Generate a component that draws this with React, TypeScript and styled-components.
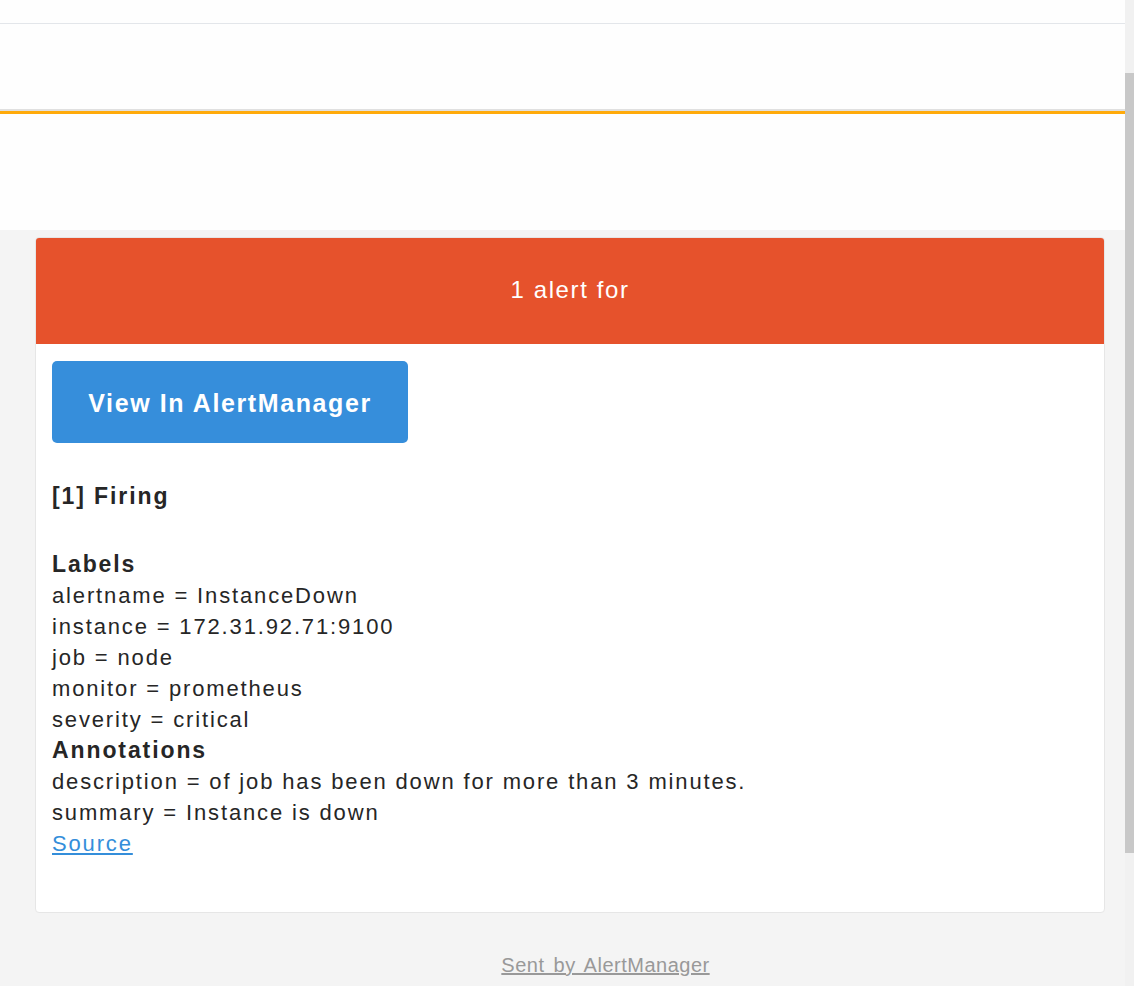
import React from "react";
import styled, { createGlobalStyle } from "styled-components";

const Global = createGlobalStyle`
  html, body { margin: 0; padding: 0; background: #f4f4f4; }
  body { font-family: "Liberation Sans", Arial, Helvetica, sans-serif; overflow: hidden; }
`;

const Frame = styled.div`
  display: flex;
  width: 1134px;
  height: 986px;
  overflow: hidden;
`;

const Page = styled.div`
  flex: 1;
  display: flex;
  flex-direction: column;
  background: #f4f4f4;
`;

const TopBar = styled.div`
  height: 23px;
  background: #fefefe;
  border-bottom: 1px solid #e3e6ea;
`;

const Band = styled.div`
  height: 85px;
  background: #fefefe;
  border-bottom: 2px solid #e0e0e0;
`;

const OrangeRule = styled.div`
  height: 3px;
  background: #ffaa0a;
`;

const Blank = styled.div`
  height: 116px;
  background: #fefefe;
`;

const Main = styled.div`
  padding: 7px 20px 0 35px;
`;

const Card = styled.div`
  background: #ffffff;
  border: 1px solid #e6e6e6;
  border-radius: 4px;
  overflow: hidden;
`;

const Header = styled.div`
  height: 106px;
  background: #e6522c;
  color: #ffffff;
  display: flex;
  align-items: center;
  justify-content: center;
  padding-bottom: 3px;
  box-sizing: border-box;
  font-size: 24px;
  letter-spacing: 1.6px;
`;

const Body = styled.div`
  padding: 17px 16px 53px;
  color: #262626;
  font-size: 22px;
  letter-spacing: 1.85px;
  line-height: 31px;
`;

const Button = styled.a`
  display: flex;
  align-items: center;
  justify-content: center;
  width: 356px;
  height: 82px;
  padding-top: 3px;
  box-sizing: border-box;
  border-radius: 5px;
  background: #368edb;
  color: #ffffff;
  font-weight: bold;
  font-size: 25px;
  letter-spacing: 1.6px;
  text-decoration: none;
`;

const Heading = styled.div<{ $gap: number }>`
  margin-top: ${(p) => p.$gap}px;
  font-weight: bold;
  font-size: 23px;
  letter-spacing: 1.9px;
`;

const Line = styled.div``;

const SourceLink = styled.a`
  color: #348eda;
  text-decoration: underline;
`;

const Footer = styled.div`
  padding: 37px 0 0 86px;
  text-align: center;
  line-height: 31px;
  font-size: 20px;
`;

const FooterLink = styled.a`
  color: #999999;
  text-decoration: underline;
  letter-spacing: 0.5px;
  word-spacing: 3px;
`;

const Scrollbar = styled.div`
  width: 9px;
  background: #f1f1f1;
  display: flex;
  flex-direction: column;
`;

const Thumb = styled.div`
  margin-top: 73px;
  height: 780px;
  background: #c8c8c8;
`;

const labels = [
  "alertname = InstanceDown",
  "instance = 172.31.92.71:9100",
  "job = node",
  "monitor = prometheus",
  "severity = critical",
];

const annotations = [
  "description = of job has been down for more than 3 minutes.",
  "summary = Instance is down",
];

export default function App() {
  return (
    <Frame>
      <Global />
      <Page>
        <TopBar />
        <Band />
        <OrangeRule />
        <Blank />
        <Main>
          <Card>
            <Header>1 alert for</Header>
            <Body>
              <Button href="#">View In AlertManager</Button>
              <Heading $gap={38}>[1] Firing</Heading>
              <Heading $gap={37}>Labels</Heading>
              {labels.map((l) => (
                <Line key={l}>{l}</Line>
              ))}
              <Heading $gap={0}>Annotations</Heading>
              {annotations.map((l) => (
                <Line key={l}>{l}</Line>
              ))}
              <Line>
                <SourceLink href="#">Source</SourceLink>
              </Line>
            </Body>
          </Card>
        </Main>
        <Footer>
          <FooterLink href="#">Sent by AlertManager</FooterLink>
        </Footer>
      </Page>
      <Scrollbar>
        <Thumb />
      </Scrollbar>
    </Frame>
  );
}
